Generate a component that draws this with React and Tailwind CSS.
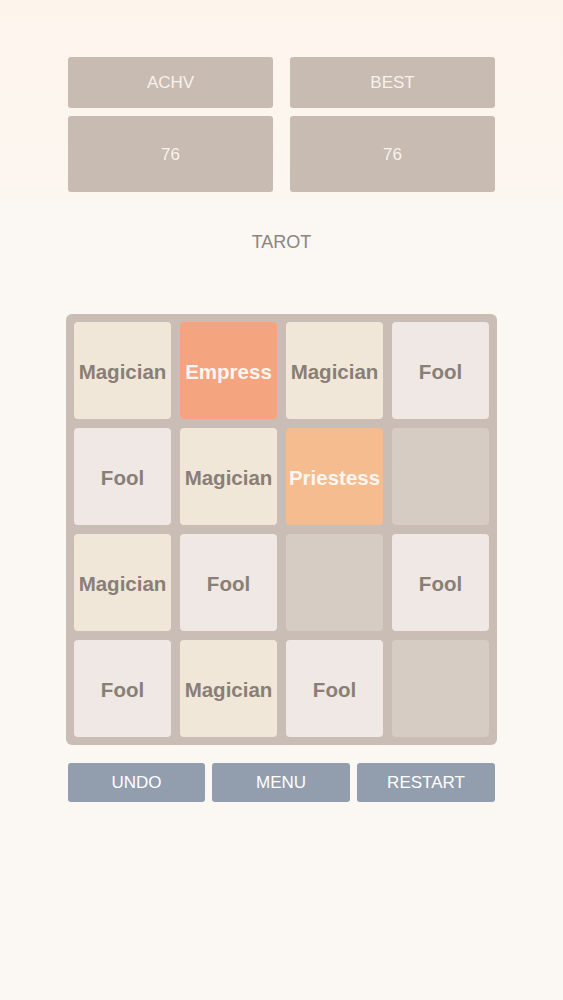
import React from "react";

const tiles = [
  ["Magician", "Empress", "Magician", "Fool"],
  ["Fool", "Magician", "Priestess", ""],
  ["Magician", "Fool", "", "Fool"],
  ["Fool", "Magician", "Fool", ""],
];

const tileStyle = {
  Fool: "bg-[#efe8e4] text-[#8a7f77]",
  Magician: "bg-[#f1e7d8] text-[#8a7f77]",
  Empress: "bg-[#f4a57f] text-[#fdf6f0]",
  Priestess: "bg-[#f4bc8f] text-[#fdf6f0]",
  "": "bg-[#d6ccc4]",
};

const Tile = ({ name }) => (
  <div
    className={`h-[97px] w-[97px] rounded-[4px] flex items-center justify-center pt-[3px] text-[20.5px] font-bold ${tileStyle[name]}`}
  >
    {name}
  </div>
);

const ScoreBox = ({ label, value }) => (
  <div className="w-[205px] flex flex-col gap-2">
    <div className="h-[51px] rounded-[3px] bg-[#c7bbb2] flex items-center justify-center text-[17px] text-[#f8f2ec]">
      {label}
    </div>
    <div className="h-[76px] rounded-[3px] bg-[#c7bbb2] flex items-center justify-center pt-[2px] text-[17px] text-[#f8f2ec]">
      {value}
    </div>
  </div>
);

const buttons = [
  ["UNDO", "w-[137px]"],
  ["MENU", "w-[138px]"],
  ["RESTART", "w-[138px]"],
];

const App = () => {
  return (
    <div
      className="min-h-[1000px] w-[563px] bg-[#fbf7f3]"
      style={{ fontFamily: '"Liberation Sans", Arial, sans-serif' }}
    >
      <div className="h-[200px] bg-gradient-to-b from-[#fdf5ec] to-[#fcf6f0] pt-[57px] flex justify-center gap-[17px]">
        <ScoreBox label="ACHV" value="76" />
        <ScoreBox label="BEST" value="76" />
      </div>
      <div className="h-[114px] flex justify-center pt-[29px] text-[18px] text-[#8a8582]">
        TAROT
      </div>
      <div className="flex justify-center">
        <div className="w-[431px] rounded-[6px] bg-[#c9bdb5] p-2 grid grid-cols-4 gap-[9px]">
          {tiles.flat().map((t, i) => (
            <Tile key={i} name={t} />
          ))}
        </div>
      </div>
      <div className="mt-[18px] flex justify-center gap-[7px]">
        {buttons.map(([b, w]) => (
          <button
            key={b}
            className={`${w} h-[39px] rounded-[3px] bg-[#929eae] text-white text-[17px] flex items-center justify-center`}
          >
            {b}
          </button>
        ))}
      </div>
    </div>
  );
};

export default App;
